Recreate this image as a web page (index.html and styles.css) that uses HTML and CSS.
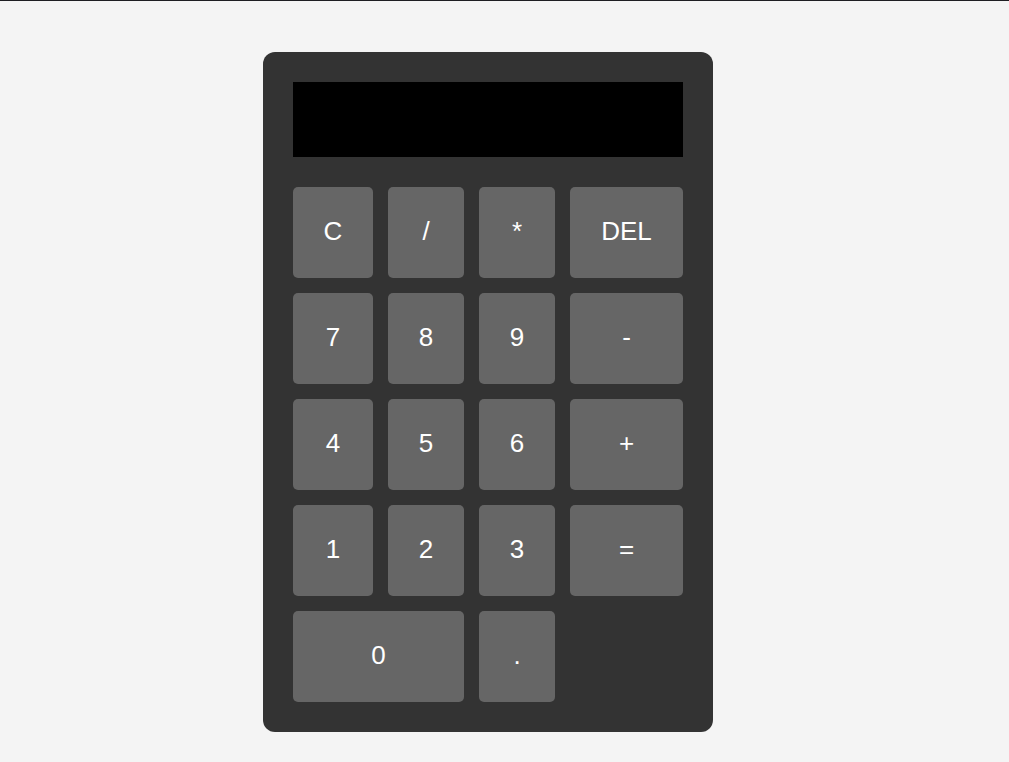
FILE: index.html
```html
<!DOCTYPE html>
<html>
<head>
<meta charset="utf-8">
<link rel="stylesheet" href="styles.css">
</head>
<body>
<div class="page">
  <div class="calculator">
    <div class="display"></div>
    <div class="keys">
      <button class="key">C</button>
      <button class="key">/</button>
      <button class="key">*</button>
      <button class="key">DEL</button>
      <button class="key">7</button>
      <button class="key">8</button>
      <button class="key">9</button>
      <button class="key">-</button>
      <button class="key">4</button>
      <button class="key">5</button>
      <button class="key">6</button>
      <button class="key">+</button>
      <button class="key">1</button>
      <button class="key">2</button>
      <button class="key">3</button>
      <button class="key">=</button>
      <button class="key zero">0</button>
      <button class="key">.</button>
    </div>
  </div>
</div>
</body>
</html>
```
FILE: styles.css
```css
html, body {
  margin: 0;
  padding: 0;
  background: #f4f4f4;
}
body {
  border-top: 1px solid #1e1e22;
  font-family: "Liberation Sans", Arial, sans-serif;
}
.page {
  padding: 51px 0 0 263px;
}
.calculator {
  width: 390px;
  padding: 30px;
  background: #333333;
  border-radius: 12px;
}
.display {
  height: 75px;
  background: #000000;
  margin-bottom: 30px;
}
.keys {
  display: grid;
  grid-template-columns: 80px 76px 76px 113px;
  grid-auto-rows: 91px;
  gap: 15px;
}
.key {
  border: none;
  margin: 0;
  padding: 0 0 3px 0;
  background: #666666;
  color: #ffffff;
  border-radius: 5px;
  font-family: "Liberation Sans", Arial, sans-serif;
  font-size: 26px;
}
.zero {
  grid-column: span 2;
}
```
